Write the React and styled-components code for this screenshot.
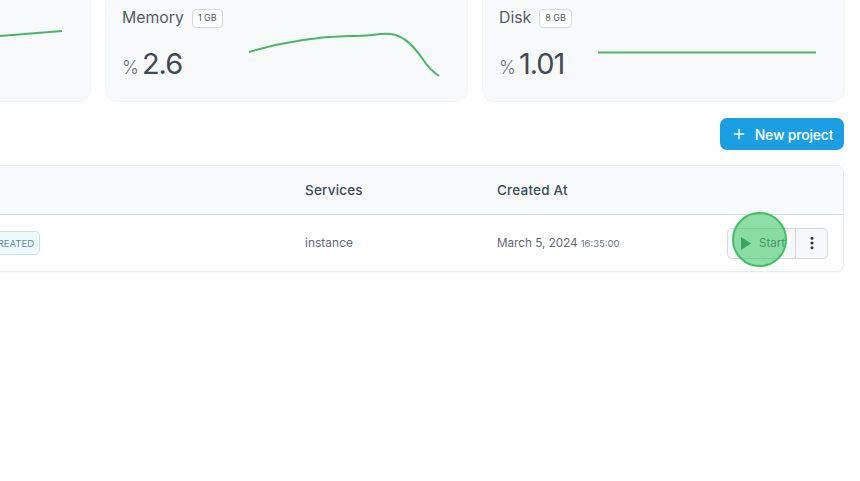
import React from 'react';
import styled, { createGlobalStyle } from 'styled-components';
import { Plus, EllipsisVertical } from 'lucide-react';

const GlobalStyle = createGlobalStyle`
  html, body {
    margin: 0;
    padding: 0;
    background: #ffffff;
    font-family: Inter, "Open Sans", sans-serif;
    overflow: hidden;
  }
`;

const Viewport = styled.div`
  width: 860px;
  height: 481px;
  overflow: hidden;
`;

const Content = styled.div`
  width: 1116px;
  margin: -20px 0 0 -272px;
  display: flex;
  flex-direction: column;
`;

const StatGrid = styled.div`
  display: grid;
  grid-template-columns: repeat(3, 363px);
  gap: 14px;
`;

const StatCard = styled.div`
  height: 122px;
  box-sizing: border-box;
  padding: 28px 28px 0 16px;
  display: flex;
  justify-content: ${({ $end }) => ($end ? 'flex-end' : 'flex-start')};
  gap: 26px;
  background: #f8f9fb;
  border: 1px solid #f4f5f7;
  border-radius: 12px;
`;

const StatText = styled.div`
  display: flex;
  flex-direction: column;
  gap: 18px;
`;

const StatTitle = styled.div`
  display: flex;
  align-items: center;
  gap: 8px;
  height: 20px;
  margin-top: -1px;
  font-size: 15.8px;
  line-height: 20px;
  color: #535b66;
`;

const SizeBadge = styled.span`
  height: 17px;
  padding: 0 5px;
  display: inline-flex;
  align-items: center;
  font-size: 9px;
  color: #4b5563;
  background: #ffffff;
  border: 1px solid #d5d8dd;
  border-radius: 4px;
`;

const StatValue = styled.div`
  display: flex;
  align-items: baseline;
  gap: 3px;
  font-size: 29px;
  line-height: 36px;
  letter-spacing: -1px;
  color: #414955;
`;

const Percent = styled.span`
  font-size: 18px;
  letter-spacing: 0;
  font-weight: 300;
  color: #6b7280;
`;

const Spark = styled.svg`
  width: ${({ $w }) => $w}px;
  height: 60px;
  margin-top: 16px;
  flex: none;
  overflow: visible;
`;

const SparkLine = styled.path`
  fill: none;
  stroke: #4ab767;
  stroke-width: 2;
`;

const Toolbar = styled.div`
  display: flex;
  justify-content: flex-end;
  margin-top: 16px;
`;

const NewButton = styled.button`
  width: 124px;
  height: 32px;
  display: flex;
  align-items: center;
  justify-content: center;
  gap: 8px;
  padding: 0;
  font: 500 14px Inter, sans-serif;
  letter-spacing: -0.2px;
  color: #ffffff;
  background: #1b9fe2;
  border: none;
  border-radius: 7px;
`;

const Table = styled.div`
  margin-top: 15px;
  border: 1px solid #e8eaed;
  border-radius: 8px;
  box-shadow: 0 1px 2px rgba(0, 0, 0, 0.04);
`;

const Row = styled.div`
  display: grid;
  grid-template-columns: 255px 321px 192px 1fr auto;
  align-items: center;
`;

const HeadRow = styled(Row)`
  height: 48px;
  background: #f8f9fb;
  border-bottom: 1px solid #d5d8dd;
  border-radius: 8px 8px 0 0;
  font-size: 13.5px;
  font-weight: 500;
  letter-spacing: 0.2px;
  color: #3d4b5c;
`;

const HeadCell = styled.span`
  grid-column: ${({ $col }) => $col};
`;

const BodyRow = styled(Row)`
  height: 56px;
  font-size: 12px;
  color: #5f6873;
`;

const StatusBadge = styled.span`
  grid-column: 1;
  justify-self: end;
  margin-right: -56px;
  height: 24px;
  box-sizing: border-box;
  padding: 0 5px;
  display: inline-flex;
  align-items: center;
  font-size: 9.5px;
  color: #5a8fae;
  background: #eef8fd;
  border: 1px solid #bfe3f5;
  border-radius: 5px;
`;

const ServiceCell = styled.span`
  grid-column: 3;
  margin-top: -1px;
`;

const DateCell = styled.span`
  grid-column: 4;
  display: flex;
  align-items: baseline;
  gap: 3px;
  margin-top: -1px;
  font-size: 11.7px;
`;

const TimeText = styled.span`
  font-size: 9.5px;
  color: #6b7280;
`;

const Actions = styled.div`
  grid-column: 5;
  margin-right: 15px;
  position: relative;
  display: flex;
  height: 31px;
  background: #f6f8fa;
  border: 1px solid #d5d8dd;
  border-radius: 5px;
  box-sizing: border-box;
`;

const StartAction = styled.div`
  width: 68px;
  display: flex;
  align-items: center;
  gap: 7px;
  padding-left: 12px;
  box-sizing: border-box;
  font-size: 11.5px;
  color: #4b5563;
  border-right: 1px solid #d5d8dd;
`;

const PlayIcon = styled.svg`
  width: 12px;
  height: 15px;
  fill: #2f7d55;
`;

const MoreAction = styled.div`
  width: 31px;
  display: flex;
  align-items: center;
  justify-content: center;
  color: #262c34;
`;

const ClickMarker = styled.div`
  position: absolute;
  left: 4px;
  top: -17px;
  width: 55px;
  height: 55px;
  box-sizing: border-box;
  border-radius: 50%;
  background: rgba(62, 198, 104, 0.58);
  border: 2px solid #3fbf68;
`;

const App = () => (
  <Viewport>
    <GlobalStyle />
    <Content>
      <StatGrid>
        <StatCard $end>
          <Spark $w={300} viewBox="0 0 300 60">
            <SparkLine d="M0 22 L238 11 L300 6" />
          </Spark>
        </StatCard>
        <StatCard>
          <StatText>
            <StatTitle>Memory <SizeBadge>1 GB</SizeBadge></StatTitle>
            <StatValue><Percent>%</Percent>2.6</StatValue>
          </StatText>
          <Spark $w={190} viewBox="0 0 190 60">
            <SparkLine d="M0 27 C30 18 60 12 100 11 C110 11 118 10.5 122 10 C130 9 136 8 142 9 C156 11 165 22 173 33 C178 41 184 47 190 51" />
          </Spark>
        </StatCard>
        <StatCard>
          <StatText>
            <StatTitle>Disk <SizeBadge>8 GB</SizeBadge></StatTitle>
            <StatValue><Percent>%</Percent>1.01</StatValue>
          </StatText>
          <Spark $w={218} viewBox="0 0 218 60">
            <SparkLine d="M0 27.5 L218 27.5" />
          </Spark>
        </StatCard>
      </StatGrid>
      <Toolbar>
        <NewButton><Plus size={16} />New project</NewButton>
      </Toolbar>
      <Table>
        <HeadRow>
          <HeadCell $col={3}>Services</HeadCell>
          <HeadCell $col={4}>Created At</HeadCell>
        </HeadRow>
        <BodyRow>
          <StatusBadge>CREATED</StatusBadge>
          <ServiceCell>instance</ServiceCell>
          <DateCell>
            March 5, 2024 <TimeText>16:35:00</TimeText>
          </DateCell>
          <Actions>
            <StartAction>
              <PlayIcon viewBox="0 0 12 15"><path d="M1 1 L11 7.5 L1 14 Z" /></PlayIcon>
              Start
            </StartAction>
            <MoreAction><EllipsisVertical size={16} strokeWidth={2.5} /></MoreAction>
            <ClickMarker />
          </Actions>
        </BodyRow>
      </Table>
    </Content>
  </Viewport>
);

export default App;
